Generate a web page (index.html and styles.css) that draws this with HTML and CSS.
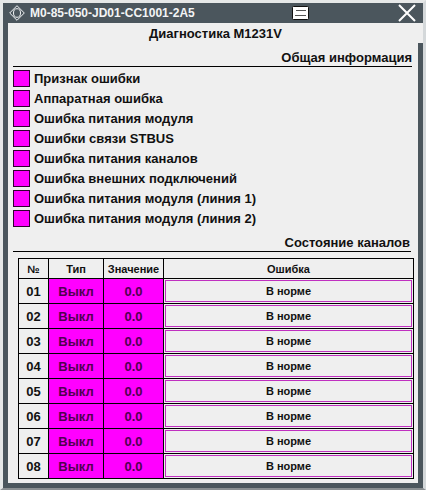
FILE: index.html
```html
<!DOCTYPE html>
<html lang="ru">
<head>
    <meta charset="UTF-8">
    <meta name="viewport" content="width=device-width, initial-scale=1.0">
    <title>M0-85-050-JD01-CC1001-2A5</title>
    <link rel="stylesheet" href="styles.css">
</head>
<body>
    <div class="window">
        <header class="titlebar">
            <svg class="logo" width="16" height="16" viewBox="0 0 16 16" fill="none" stroke="#f2f4f5" aria-hidden="true">
                <path d="M8 .7 15.3 8 8 15.3.7 8z"/>
                <ellipse cx="8" cy="8" rx="3.5" ry="4.3"/>
            </svg>
            <span class="name">M0-85-050-JD01-CC1001-2A5</span>
            <button class="note" type="button" aria-label="Журнал">
                <svg width="17" height="14" viewBox="0 0 17 14">
                    <rect x=".5" y=".5" width="16" height="13" rx="1" fill="#fff" stroke="#111"/>
                    <path d="M4 4.5h10M3 9.5h11" stroke="#555"/>
                </svg>
            </button>
            <button class="close" type="button" aria-label="Закрыть">
                <svg width="18" height="18" viewBox="0 0 18 18">
                    <path d="M1 1l16 16M17 1L1 17" stroke="#fff" stroke-width="2"/>
                </svg>
            </button>
        </header>
        <h1>Диагностика M1231V</h1>
        <main>
            <h2>Общая информация</h2>
            <ul class="flags">
                <li>Признак ошибки</li>
                <li>Аппаратная ошибка</li>
                <li>Ошибка питания модуля</li>
                <li>Ошибки связи STBUS</li>
                <li>Ошибка питания каналов</li>
                <li>Ошибка внешних подключений</li>
                <li>Ошибка питания модуля (линия 1)</li>
                <li>Ошибка питания модуля (линия 2)</li>
            </ul>
            <h2 class="channels-title">Состояние каналов</h2>
            <table>
                <thead>
                    <tr><th class="num">№</th><th class="type">Тип</th><th class="value">Значение</th><th>Ошибка</th></tr>
                </thead>
                <tbody>
                    <tr><td>01</td><td class="off">Выкл</td><td class="off">0.0</td><td class="state"><div>В норме</div></td></tr>
                    <tr><td>02</td><td class="off">Выкл</td><td class="off">0.0</td><td class="state"><div>В норме</div></td></tr>
                    <tr><td>03</td><td class="off">Выкл</td><td class="off">0.0</td><td class="state"><div>В норме</div></td></tr>
                    <tr><td>04</td><td class="off">Выкл</td><td class="off">0.0</td><td class="state"><div>В норме</div></td></tr>
                    <tr><td>05</td><td class="off">Выкл</td><td class="off">0.0</td><td class="state"><div>В норме</div></td></tr>
                    <tr><td>06</td><td class="off">Выкл</td><td class="off">0.0</td><td class="state"><div>В норме</div></td></tr>
                    <tr><td>07</td><td class="off">Выкл</td><td class="off">0.0</td><td class="state"><div>В норме</div></td></tr>
                    <tr><td>08</td><td class="off">Выкл</td><td class="off">0.0</td><td class="state"><div>В норме</div></td></tr>
                </tbody>
            </table>
        </main>
    </div>
</body>
</html>
```
FILE: styles.css
```css
* {
    box-sizing: border-box;
}
body {
    margin: 0;
    font-family: "Liberation Sans", Arial, sans-serif;
    font-size: 13px;
    font-weight: bold;
    color: #111;
    background-color: #efefef;
}
.window {
    border: 3px solid #e6e8e8;
    border-right-color: #d4d8da;
    border-bottom: 2px solid #8a8f92;
}
.titlebar {
    display: flex;
    align-items: center;
    height: 20px;
    padding: 0 7px 0 6px;
    background-color: #4b565d;
    color: #f2f4f5;
}
.name {
    flex: 1;
    margin-left: 5px;
    font-size: 12px;
}
button {
    display: flex;
    padding: 0;
    border: none;
    background: none;
    cursor: pointer;
}
.note {
    margin-right: 89px;
}
h1, h2 {
    margin: 0;
    font-size: 13px;
}
h1 {
    height: 20px;
    line-height: 22px;
    text-align: center;
    border-left: 5px solid #4b565d;
}
main {
    padding: 4px 4px 4px 5px;
    border: 5px solid #4b565d;
    border-top: none;
}
h2 {
    height: 20px;
    line-height: 22px;
    margin-right: 2px;
    text-align: right;
    border-bottom: 1px solid #000;
}
.channels-title {
    margin-top: 4px;
    margin-right: 3px;
    padding-right: 1px;
}
.flags {
    list-style: none;
    margin: 0;
    padding: 1px 0 0;
}
.flags li {
    display: flex;
    align-items: center;
    gap: 4px;
    height: 20px;
}
.flags li::before {
    content: "";
    width: 15px;
    height: 15px;
    border: 1px solid #300030;
    background-color: #ff00ff;
}
table {
    width: calc(100% - 5px);
    margin: 6px 0 0 5px;
    border-collapse: collapse;
    table-layout: fixed;
}
th, td {
    height: 25px;
    padding: 0;
    border: 1px solid #000;
    text-align: center;
}
th {
    height: 20px;
    font-size: 11px;
    line-height: 14px;
}
.num {
    width: 30px;
}
.type {
    width: 55px;
}
.value {
    width: 60px;
}
.off {
    background-color: #ff00ff;
    color: #500050;
}
.state {
    padding: 1px;
    font-size: 11px;
}
.state div {
    height: 22px;
    line-height: 20px;
    border: 1px solid #c030c0;
}
```
